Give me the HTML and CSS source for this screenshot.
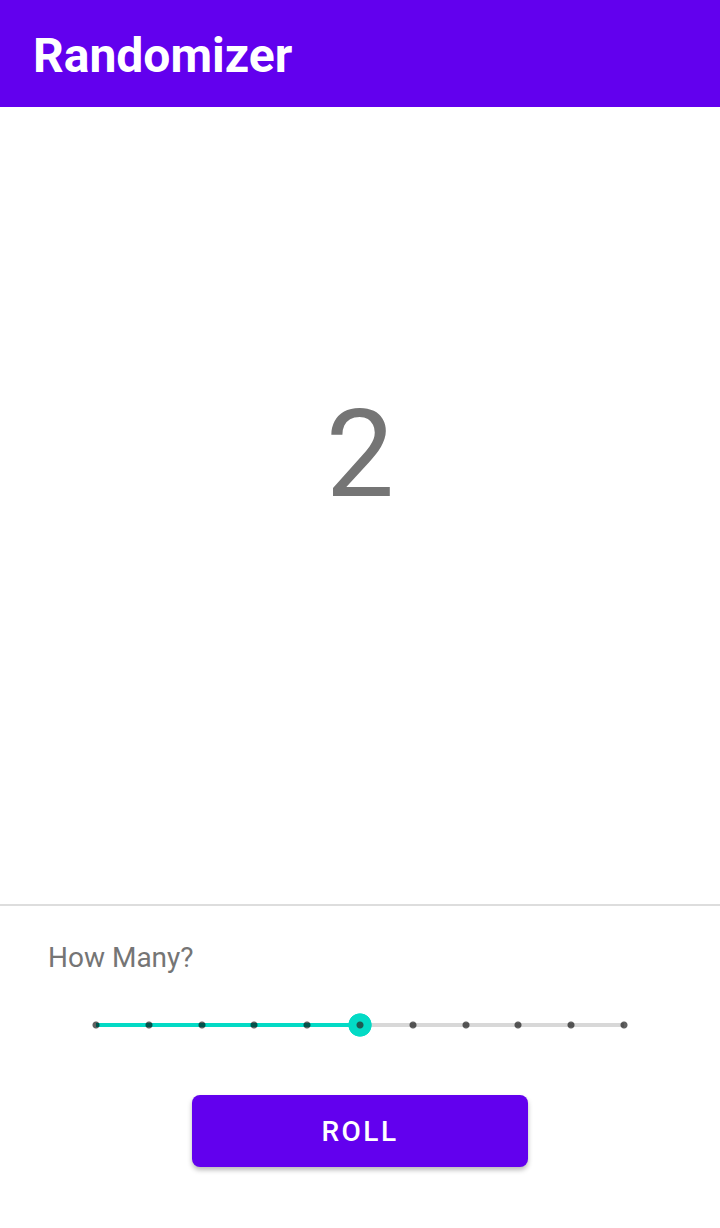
FILE: index.html
```html
<!DOCTYPE html>
<html>
<head>
<meta charset="utf-8">
<link rel="stylesheet" href="styles.css">
</head>
<body>
<div class="app">
  <header class="appbar"><h1 class="title">Randomizer</h1></header>
  <main class="result"><div class="number">2</div></main>
  <section class="controls">
    <div class="label">How Many?</div>
    <div class="slider">
      <span class="tick"></span><span class="tick"></span><span class="tick"></span><span class="tick"></span><span class="tick"></span>
      <span class="tick thumb"></span>
      <span class="tick"></span><span class="tick"></span><span class="tick"></span><span class="tick"></span><span class="tick"></span>
    </div>
    <div class="btnrow"><button class="roll">ROLL</button></div>
  </section>
</div>
</body>
</html>
```
FILE: styles.css
```css
html, body { margin: 0; padding: 0; background: #fff; }
body { font-family: Roboto, "Noto Sans", sans-serif; }
.app { width: 720px; height: 1228px; display: flex; flex-direction: column; }
.appbar {
  height: 107px; background: #6200ee; display: flex; align-items: center;
  padding-left: 33px; box-sizing: border-box; padding-top: 4px;
}
.title { margin: 0; color: #fff; font-size: 48px; font-weight: 700; line-height: 56px; }
.result {
  height: 799px; box-sizing: border-box; padding-top: 287px;
  border-bottom: 2px solid #dddddd; display: flex; justify-content: center;
}
.number { font-size: 122px; line-height: 122px; color: #757575; font-weight: 400; }
.controls { display: flex; flex-direction: column; }
.label { margin: 35px 0 0 48px; font-size: 28px; color: #757575; line-height: 33px; }
.slider {
  margin: 39px 84px 0; height: 24px; display: flex; justify-content: space-between; align-items: center;
  background: linear-gradient(to right, #03dac5 0 50%, #d8d8d8 50% 100%) center / calc(100% - 24px) 4px no-repeat;
}
.tick {
  width: 24px; height: 24px;
  background: radial-gradient(circle, rgba(0,0,0,0.62) 3px, rgba(0,0,0,0) 4px);
}
.thumb {
  background: radial-gradient(circle, #1d5a52 3px, #03dac5 4px, #03dac5 11.3px, rgba(3,218,197,0) 12px);
}
.btnrow { display: flex; justify-content: center; margin-top: 58px; }
.roll {
  width: 336px; height: 72px; border: none; border-radius: 8px; background: #6200ee; color: #fff;
  font-family: Roboto, sans-serif; font-weight: 500; font-size: 28px; letter-spacing: 2.5px;
  box-shadow: 0 3px 5px rgba(0,0,0,0.28); padding: 0;
}
```
